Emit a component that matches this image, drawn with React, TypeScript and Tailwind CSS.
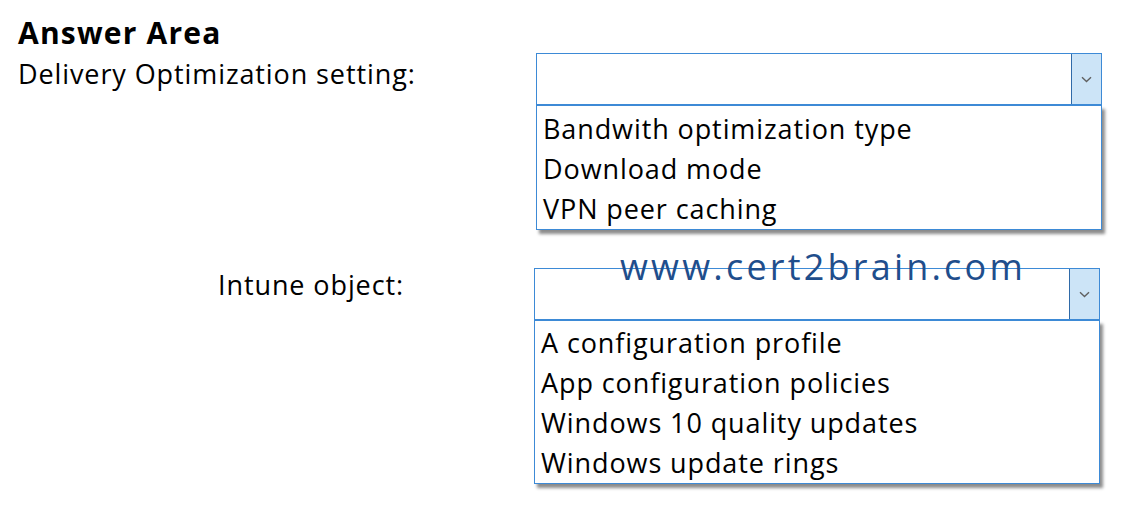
const font = { fontFamily: '"Open Sans", Lato, sans-serif' }

function Chevron() {
  return (
    <svg width="11" height="7" viewBox="0 0 11 7" fill="none">
      <path d="M1 1.2 L5.5 5.5 L10 1.2" stroke="#606060" strokeWidth="1.4" />
    </svg>
  )
}

function Dropdown({ options, padTop }: { options: string[]; padTop: string }) {
  return (
    <div className="w-[566px]">
      {/* closed select */}
      <div className="h-[52px] flex border border-[#3d8ad6] bg-white">
        <div className="flex-1" />
        <div className="w-[30px] border-l border-[#2f6aa8] bg-[#cce4f7] flex items-center justify-center">
          <Chevron />
        </div>
      </div>
      {/* open list */}
      <div className={`border border-[#3d8ad6] bg-white shadow-[3px_4px_3px_rgba(0,0,0,0.45)] ${padTop}`}>
        {options.map(o => (
          <div key={o} className="h-10 leading-[40px] pl-[6px] text-[27px] tracking-[0.9px] text-black">
            {o}
          </div>
        ))}
      </div>
    </div>
  )
}

export default function App() {
  return (
    <div className="relative w-[1128px] h-[512px] bg-white overflow-hidden" style={font}>
      {/* first row */}
      <div className="flex">
        <div className="w-[536px] pl-[18px] pt-[16px]">
          <h1 className="text-[30px] leading-[34px] font-bold tracking-[1.2px] text-black">Answer Area</h1>
          <p className="text-[27px] leading-[30px] tracking-[0.9px] text-black mt-[9px]">Delivery Optimization setting:</p>
        </div>
        <div className="pt-[53px]">
          <Dropdown
            padTop="pt-[3px]"
            options={['Bandwith optimization type', 'Download mode', 'VPN peer caching']}
          />
        </div>
      </div>

      {/* second row */}
      <div className="flex mt-[38px]">
        <div className="w-[534px] pl-[218px] pt-[2px]">
          <p className="text-[27px] leading-[30px] tracking-[0.9px] text-black">Intune object:</p>
        </div>
        <Dropdown
          padTop="pt-[2px]"
          options={[
            'A configuration profile',
            'App configuration policies',
            'Windows 10 quality updates',
            'Windows update rings',
          ]}
        />
      </div>

      {/* watermark */}
      <div className="absolute left-[620px] top-[245px] text-[36px] leading-[44px] tracking-[3.2px] text-[#1f4e8c]">
        www.cert2brain.com
      </div>
    </div>
  )
}
